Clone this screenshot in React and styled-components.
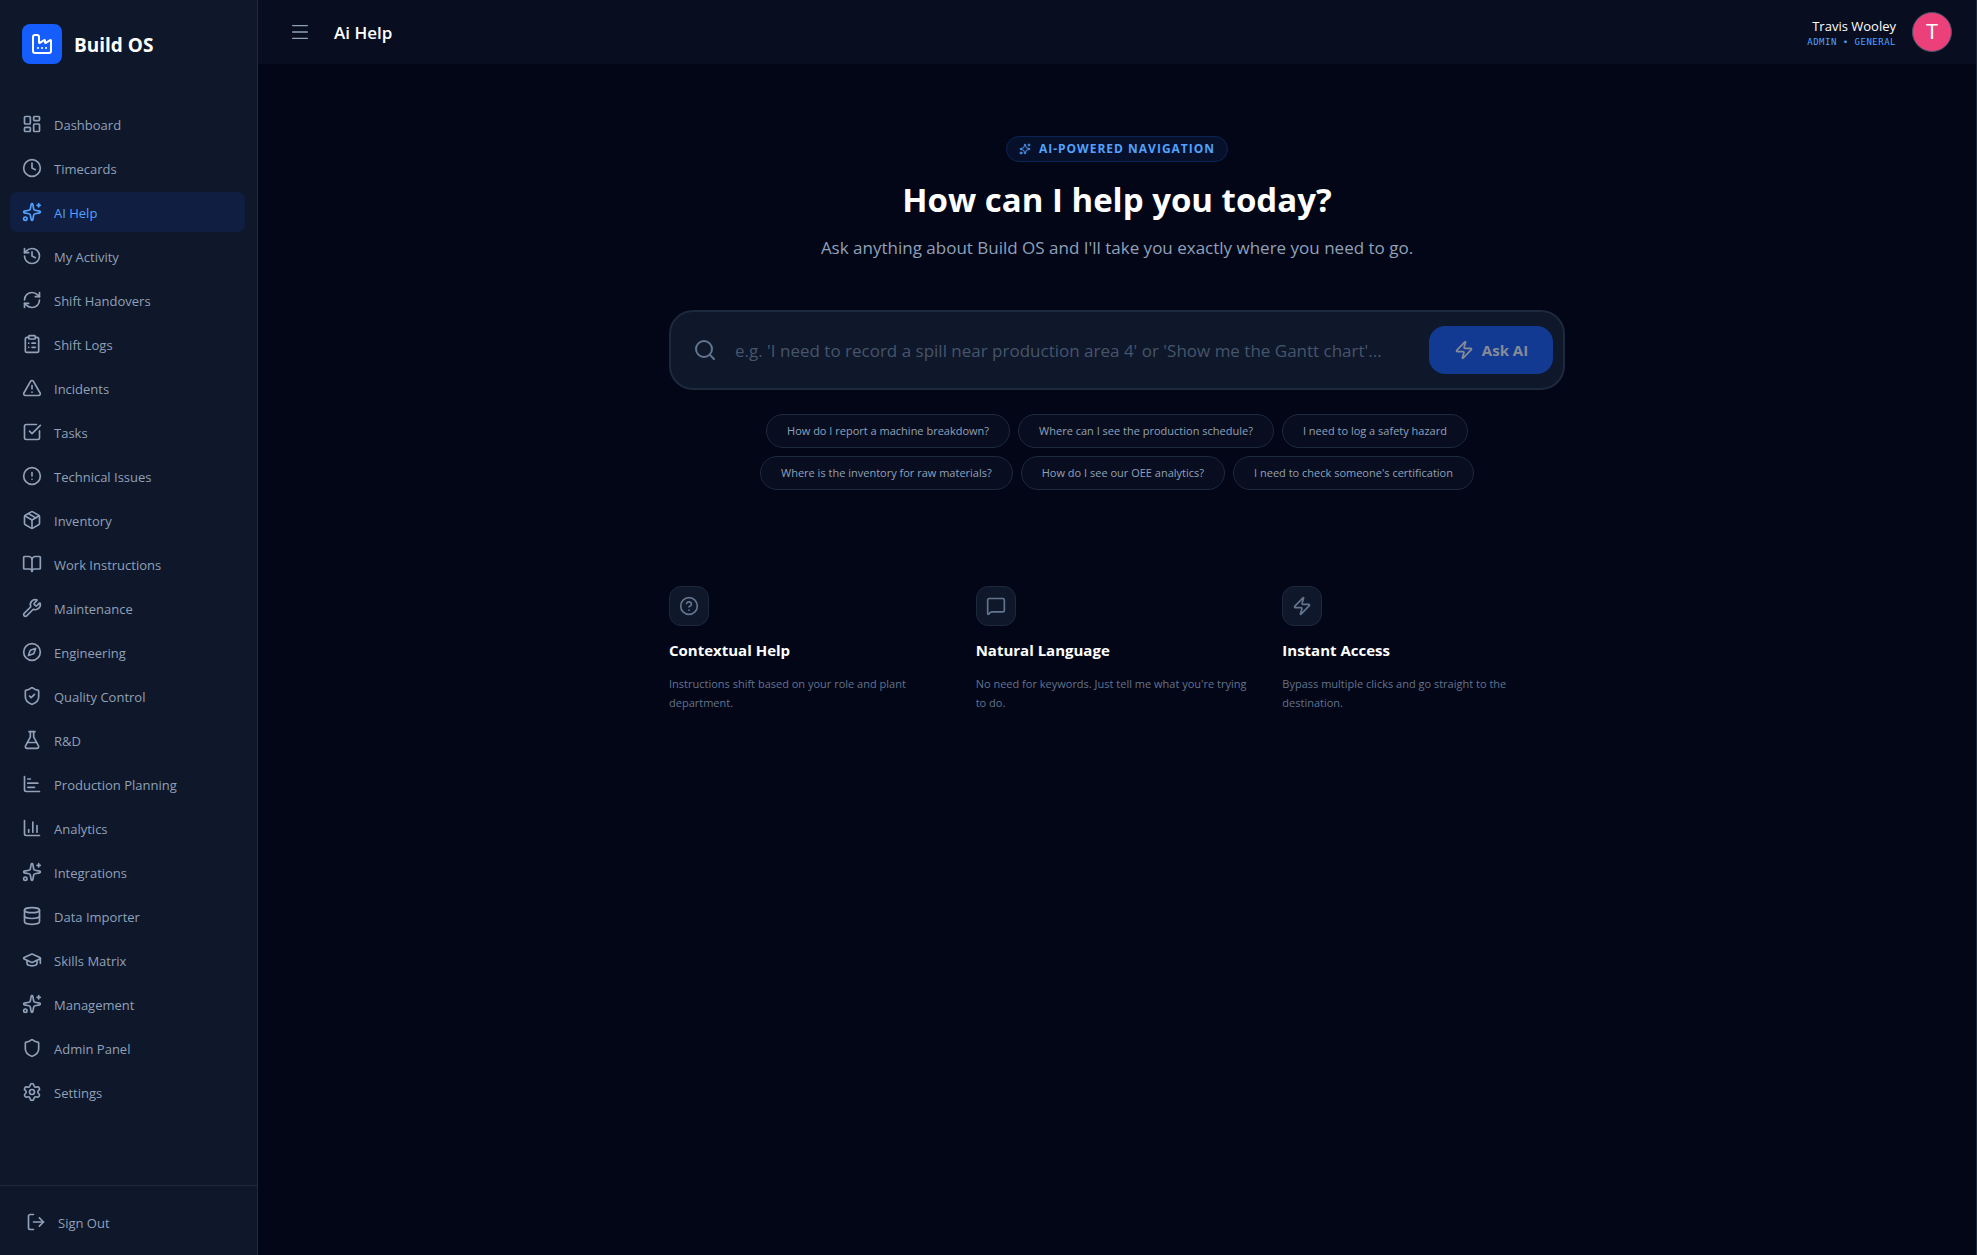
import React, { useState } from "react";
import styled, { createGlobalStyle } from "styled-components";
import {
  LayoutDashboard, Clock, Sparkles, History, RefreshCw, ClipboardList, TriangleAlert,
  SquareCheckBig, CircleAlert, Package, BookOpen, Wrench, Compass, ShieldCheck,
  FlaskConical, ChartBar, ChartColumn, Database, GraduationCap, Shield, Settings,
  LogOut, Factory, Menu, Search, Zap, CircleQuestionMark, MessageSquare,
} from "lucide-react";

const GlobalStyle = createGlobalStyle`
  *, *::before, *::after { box-sizing: border-box; }
  body {
    margin: 0;
    background: #020617;
    color: #f8fafc;
    font-family: "Open Sans", "Noto Sans", sans-serif;
  }
  button, input { font-family: inherit; }
  h1, h2, h3, p, ul { margin: 0; padding: 0; }
`;

const Shell = styled.div`
  display: flex;
  min-height: 100vh;
  border-right: 1px solid #1e293b;
`;

const Sidebar = styled.aside`
  flex: 0 0 258px;
  display: flex;
  flex-direction: column;
  background: #0f172a;
  border-right: 1px solid #1e293b;
`;

const Brand = styled.div`
  display: flex;
  align-items: center;
  gap: 12px;
  padding: 24px 22px 40px;
`;

const BrandMark = styled.div`
  display: grid;
  place-items: center;
  width: 40px;
  height: 40px;
  border-radius: 8px;
  background: #155dfc;
  color: #fff;
`;

const BrandName = styled.span`
  padding-top: 2px;
  font-size: 19px;
  line-height: 28px;
  font-weight: 700;
  color: #fff;
`;

const Nav = styled.nav`
  flex: 1;
  padding: 0 12px 0 10px;
`;

const NavList = styled.ul`
  display: flex;
  flex-direction: column;
  gap: 4px;
  list-style: none;
`;

const NavLink = styled.a`
  display: flex;
  align-items: center;
  gap: 12px;
  height: 40px;
  padding: 0 12px;
  border-radius: 8px;
  font-size: 13px;
  line-height: 20px;
  text-decoration: none;
  color: ${(p) => (p.$active ? "#51a2ff" : "#90a1b9")};
  background: ${(p) => (p.$active ? "#101e42" : "transparent")};
`;

const MenuLabel = styled.span`
  padding-top: 2px;
`;

const SidebarFooter = styled.div`
  border-top: 1px solid #1e293b;
  padding: 16px 14px 13px;
`;

const SignOut = styled.button`
  display: flex;
  align-items: center;
  gap: 12px;
  width: 100%;
  height: 40px;
  padding: 0 12px;
  border: 0;
  background: none;
  font-size: 13px;
  line-height: 20px;
  color: #90a1b9;
`;

const Column = styled.div`
  flex: 1;
  min-width: 0;
`;

const TopBar = styled.header`
  display: flex;
  align-items: center;
  height: 64px;
  padding: 0 24px 0 31px;
  background: #080e20;
`;

const MenuButton = styled.button`
  display: grid;
  padding: 0;
  border: 0;
  background: none;
  color: #90a1b9;
`;

const PageTitle = styled.h1`
  margin-left: 23px;
  padding-top: 2px;
  font-size: 17px;
  line-height: 28px;
  font-weight: 600;
  color: #fff;
`;

const Account = styled.div`
  display: flex;
  align-items: center;
  gap: 16px;
  margin-left: auto;
`;

const AccountText = styled.div`
  padding-top: 2px;
  text-align: right;
`;

const AccountName = styled.div`
  font-size: 13px;
  line-height: 18px;
  color: #fff;
`;

const AccountRole = styled.div`
  font-family: "DejaVu Sans Mono", monospace;
  font-size: 9px;
  line-height: 14px;
  letter-spacing: 0.5px;
  text-transform: uppercase;
  color: #51a2ff;
`;

const Avatar = styled.div`
  display: grid;
  place-items: center;
  width: 40px;
  height: 40px;
  border: 1px solid #45556c;
  border-radius: 50%;
  background: #ec407a;
  color: #fff;
  font-family: Roboto, sans-serif;
  font-size: 21px;
  line-height: 24px;
`;

const Main = styled.main`
  max-width: 896px;
  margin: 0 auto;
  padding: 72px 0;
`;

const Hero = styled.section`
  display: flex;
  flex-direction: column;
  align-items: center;
  text-align: center;
`;

const Badge = styled.div`
  display: flex;
  align-items: center;
  gap: 8px;
  height: 26px;
  padding: 0 12px;
  border: 1px solid #0c2454;
  border-radius: 13px;
  background: #06102b;
  font-size: 12px;
  line-height: 16px;
  font-weight: 700;
  letter-spacing: 1px;
  text-transform: uppercase;
  color: #51a2ff;
`;

const Question = styled.h2`
  margin-top: 18px;
  font-size: 33px;
  line-height: 40px;
  font-weight: 700;
  color: #fff;
`;

const Lead = styled.p`
  margin-top: 14px;
  font-size: 17px;
  line-height: 28px;
  color: #90a1b9;
`;

const SearchBox = styled.form`
  display: flex;
  align-items: center;
  height: 80px;
  margin-top: 48px;
  padding: 0 10px 0 22px;
  border: 2px solid #1d293d;
  border-radius: 24px;
  background: #0f172a;
  color: #62748e;
`;

const SearchField = styled.input`
  flex: 1;
  min-width: 0;
  height: 56px;
  margin: 0 16px 0 18px;
  padding: 0;
  border: 0;
  outline: 0;
  background: none;
  font-size: 17px;
  color: #fff;
  &::placeholder { color: #45556c; opacity: 1; }
`;

const AskButton = styled.button`
  display: flex;
  align-items: center;
  justify-content: center;
  gap: 8px;
  width: 124px;
  height: 48px;
  padding: 0;
  border: 0;
  border-radius: 16px;
  background: #123a93;
  font-size: 15px;
  line-height: 24px;
  font-weight: 700;
  color: #878b95;
`;

const Suggestions = styled.div`
  display: flex;
  flex-wrap: wrap;
  justify-content: center;
  gap: 8px;
  margin-top: 24px;
`;

const Chip = styled.button`
  height: 34px;
  padding: 0 20px;
  border: 1px solid #1d293d;
  border-radius: 17px;
  background: #080e20;
  font-size: 11px;
  line-height: 16px;
  color: #90a1b9;
`;

const Features = styled.section`
  display: grid;
  grid-template-columns: repeat(3, 1fr);
  gap: 24px;
  margin-top: 96px;
`;

const FeatureIcon = styled.div`
  display: grid;
  place-items: center;
  width: 40px;
  height: 40px;
  border: 1px solid #1d293d;
  border-radius: 12px;
  background: #0f172a;
  color: #62748e;
`;

const FeatureTitle = styled.h3`
  margin-top: 12px;
  font-size: 15px;
  line-height: 24px;
  font-weight: 700;
  color: #fff;
`;

const FeatureText = styled.p`
  margin-top: 12px;
  font-size: 11px;
  line-height: 19px;
  color: #62748e;
`;

const navItems = [
  ["Dashboard", LayoutDashboard],
  ["Timecards", Clock],
  ["AI Help", Sparkles],
  ["My Activity", History],
  ["Shift Handovers", RefreshCw],
  ["Shift Logs", ClipboardList],
  ["Incidents", TriangleAlert],
  ["Tasks", SquareCheckBig],
  ["Technical Issues", CircleAlert],
  ["Inventory", Package],
  ["Work Instructions", BookOpen],
  ["Maintenance", Wrench],
  ["Engineering", Compass],
  ["Quality Control", ShieldCheck],
  ["R&D", FlaskConical],
  ["Production Planning", ChartBar],
  ["Analytics", ChartColumn],
  ["Integrations", Sparkles],
  ["Data Importer", Database],
  ["Skills Matrix", GraduationCap],
  ["Management", Sparkles],
  ["Admin Panel", Shield],
  ["Settings", Settings],
];

const suggestions = [
  "How do I report a machine breakdown?",
  "Where can I see the production schedule?",
  "I need to log a safety hazard",
  "Where is the inventory for raw materials?",
  "How do I see our OEE analytics?",
  "I need to check someone's certification",
];

const features = [
  ["Contextual Help", "Instructions shift based on your role and plant department.", CircleQuestionMark],
  ["Natural Language", "No need for keywords. Just tell me what you're trying to do.", MessageSquare],
  ["Instant Access", "Bypass multiple clicks and go straight to the destination.", Zap],
];

export default function App() {
  const [query, setQuery] = useState("");
  return (
    <>
      <GlobalStyle />
      <Shell>
        <Sidebar>
          <Brand>
            <BrandMark><Factory size={24} /></BrandMark>
            <BrandName>Build OS</BrandName>
          </Brand>
          <Nav>
            <NavList>
              {navItems.map(([label, Icon]) => (
                <li key={label}>
                  <NavLink href="#" $active={label === "AI Help"}>
                    <Icon size={20} />
                    <MenuLabel>{label}</MenuLabel>
                  </NavLink>
                </li>
              ))}
            </NavList>
          </Nav>
          <SidebarFooter>
            <SignOut type="button"><LogOut size={20} /><MenuLabel>Sign Out</MenuLabel></SignOut>
          </SidebarFooter>
        </Sidebar>
        <Column>
          <TopBar>
            <MenuButton type="button" aria-label="Toggle menu"><Menu size={22} strokeWidth={1.5} /></MenuButton>
            <PageTitle>Ai Help</PageTitle>
            <Account>
              <AccountText>
                <AccountName>Travis Wooley</AccountName>
                <AccountRole>Admin • General</AccountRole>
              </AccountText>
              <Avatar>T</Avatar>
            </Account>
          </TopBar>
          <Main>
            <Hero>
              <Badge><Sparkles size={12} />AI-Powered Navigation</Badge>
              <Question>How can I help you today?</Question>
              <Lead>Ask anything about Build OS and I'll take you exactly where you need to go.</Lead>
            </Hero>
            <SearchBox onSubmit={(e) => e.preventDefault()}>
              <Search size={24} />
              <SearchField
                aria-label="Ask a question"
                placeholder="e.g. 'I need to record a spill near production area 4' or 'Show me the Gantt chart'..."
                value={query}
                onChange={(e) => setQuery(e.target.value)}
              />
              <AskButton type="submit"><Zap size={20} />Ask AI</AskButton>
            </SearchBox>
            <Suggestions>
              {suggestions.map((text) => (
                <Chip key={text} type="button" onClick={() => setQuery(text)}>{text}</Chip>
              ))}
            </Suggestions>
            <Features>
              {features.map(([title, text, Icon]) => (
                <article key={title}>
                  <FeatureIcon><Icon size={20} /></FeatureIcon>
                  <FeatureTitle>{title}</FeatureTitle>
                  <FeatureText>{text}</FeatureText>
                </article>
              ))}
            </Features>
          </Main>
        </Column>
      </Shell>
    </>
  );
}
